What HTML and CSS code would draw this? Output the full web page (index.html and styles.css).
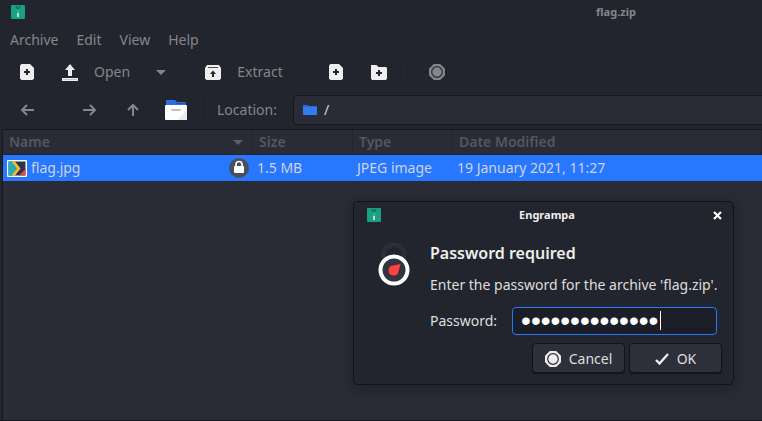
FILE: index.html
```
<!DOCTYPE html>
<html lang="en">
<head>
<meta charset="utf-8">
<title>flag.zip</title>
<link rel="stylesheet" href="styles.css">
</head>
<body>
<svg class="defs" aria-hidden="true">
  <symbol id="app" viewBox="0 0 14 14">
    <rect width="14" height="14" rx="1" fill="#1aa085"/>
    <path d="M4 1h6L8 4H6z" fill="#14735f"/>
    <path d="M6.500 1h1v2h-1z" fill="#1aa085"/>
    <path d="M6 5h2v3H6z" fill="#3fae97"/>
    <path d="M6 8h2v4H6z" fill="#b9e0d7"/>
  </symbol>
  <symbol id="stop" viewBox="0 0 16 16">
    <path d="M4.800 0h6.400L16 4.800v6.400L11.200 16H4.800L0 11.200V4.800z" fill="currentColor"/>
    <circle cx="8" cy="8" r="5.300" fill="none" stroke="#292b36" stroke-width="1.200"/>
  </symbol>
</svg>
<main class="window">
  <header class="titlebar">
    <svg class="app-icon"><use href="#app"/></svg>
    <h1>flag.zip</h1>
  </header>
  <nav class="menubar">
    <button>Archive</button><button>Edit</button><button>View</button><button>Help</button>
  </nav>
  <div class="toolbar main-tools">
    <button class="tool" aria-label="New">
      <svg width="14" height="16" viewBox="0 0 14 16"><path d="M1.500 0H10l4 4v10.500L12.500 16h-11L0 14.500v-13z" fill="#eeeeec"/><path d="M6 5h2v2h2v2H8v2H6V9H4V7h2z" fill="#23252e"/></svg>
    </button>
    <button class="tool open">
      <svg width="16" height="17" viewBox="0 0 16 17"><path d="M8 0l5 6h-3v6H6V6H3z" fill="#eeeeec"/><path d="M0 14h16v3H0z" fill="#eeeeec"/><path d="M1 15h14v1H1z" fill="#c8c8c6"/></svg>
      <span>Open</span>
    </button>
    <button class="tool drop" aria-label="Recent archives">
      <svg width="10" height="5" viewBox="0 0 10 5"><path d="M0 0h10L5 5z" fill="#85868a"/></svg>
    </button>
    <button class="tool extract">
      <svg width="16" height="15" viewBox="0 0 16 15"><path d="M2 0h12l2 3v10.500L14.500 15h-13L0 13.500V3z" fill="#eeeeec"/><path d="M3 2h10v1H3z" fill="#4c4e55"/><path d="M8 5.500l3 3.500H9v3H7V9H5z" fill="#23252e"/></svg>
      <span>Extract</span>
    </button>
    <div class="group">
      <button class="tool" aria-label="Add files">
        <svg width="14" height="16" viewBox="0 0 14 16"><path d="M1.500 0H10l4 4v10.500L12.500 16h-11L0 14.500v-13z" fill="#eeeeec"/><path d="M6 5h2v2h2v2H8v2H6V9H4V7h2z" fill="#23252e"/></svg>
      </button>
      <button class="tool" aria-label="Add folder">
        <svg width="16" height="16" viewBox="0 0 16 16"><path d="M0 1h5.500l2 2H15l1 1v10.500L15 16H1l-1-1.500z" fill="#eeeeec"/><path d="M7 6h2v2h2v2H9v2H7v-2H5V8h2z" fill="#23252e"/></svg>
      </button>
    </div>
    <button class="tool stop" aria-label="Stop"><svg width="16" height="16"><use href="#stop"/></svg></button>
  </div>
  <div class="toolbar location-tools">
    <button class="tool" aria-label="Back"><svg width="14" height="12" viewBox="0 0 14 12"><path d="M14 6H2M7 1L2 6l5 5" class="arrow"/></svg></button>
    <button class="tool forward" aria-label="Forward"><svg width="14" height="12" viewBox="0 0 14 12"><path d="M0 6h12M7 1l5 5-5 5" class="arrow"/></svg></button>
    <button class="tool" aria-label="Up"><svg width="12" height="14" viewBox="0 0 12 14"><path d="M6 13V2M1 7l5-5 5 5" class="arrow"/></svg></button>
    <button class="tool" aria-label="Home">
      <svg width="22" height="20" viewBox="0 0 22 20"><path d="M1 1q0-1 1-1h8l2 2h8q1 0 1 1v3H1z" fill="#2f6de0"/><path d="M11 3h10v1H11z" fill="#2252ad"/><rect y="5" width="22" height="15" rx="1" fill="#fff"/><path d="M22 10v10H12z" fill="#ececec"/><rect x="6" y="9" width="10" height="2" rx="1" fill="#c4c4c4"/></svg>
    </button>
    <label for="location">Location:</label>
    <div class="entry">
      <svg width="14" height="10" viewBox="0 0 14 10"><path d="M0 0h5l1 1h8v9H0z" fill="#2e66d0"/><path d="M0 2h14v8H0z" fill="#367bf0"/></svg>
      <input id="location" value="/">
    </div>
  </div>
  <section class="files">
    <table>
      <colgroup><col class="col-name"><col class="col-mid"><col class="col-mid"><col></colgroup>
      <thead><tr>
        <th><div class="split">Name <svg width="10" height="5" viewBox="0 0 10 5"><path d="M0 0h10L5 5z" fill="#5c5e64"/></svg></div></th>
        <th>Size</th><th>Type</th><th>Date Modified</th>
      </tr></thead>
      <tbody><tr>
        <td><div class="split file">
          <svg width="20" height="17" viewBox="0 0 20 17"><rect width="20" height="17" rx="1" fill="#fff"/><path d="M1.500 1.500h17v14h-17z" fill="#2d3648"/><path d="M1.500 1.500H5l5 7-5 7H1.500z" fill="#23b0bd"/><path d="M4.500 1.500H8l5.500 7-5.500 7H4.500l5.500-7z" fill="#fdbc2c"/><path d="M18.500 9v6.500H12z" fill="#f0443e"/></svg>
          <span>flag.jpg</span>
          <svg class="lock" width="20" height="20" viewBox="0 0 20 20"><circle cx="10" cy="10" r="10" fill="#4a4f5c"/><rect x="5" y="8" width="10" height="7" rx="1" fill="#fff"/><path d="M7 8V6.500a3 3 0 0 1 6 0V8" fill="none" stroke="#fff" stroke-width="1.700"/></svg>
        </div></td>
        <td>1.5 MB</td><td>JPEG image</td><td>19 January 2021, 11:27</td>
      </tr></tbody>
    </table>
  </section>
</main>
<form class="dialog" role="dialog" aria-labelledby="dialog-title">
  <header class="dialog-bar">
    <svg class="app-icon"><use href="#app"/></svg>
    <h2 id="dialog-title">Engrampa</h2>
    <button type="button" class="close" aria-label="Close"><svg width="9" height="9" viewBox="0 0 9 9"><path d="M1 1l7 7M8 1L1 8" stroke="#fff" stroke-width="2.200"/></svg></button>
  </header>
  <div class="dialog-body">
    <svg class="padlock" width="32" height="43" viewBox="0 0 32 43">
      <path d="M4 20V12a12 12 0 0 1 24 0v8h-4v-8a8 8 0 0 0-16 0v8z" fill="#2a2c36"/>
      <path d="M4 14V12a12 12 0 0 1 24 0v2" fill="none" stroke="#333540"/>
      <circle cx="16" cy="27" r="13.500" fill="#323440" stroke="#fff" stroke-width="4"/>
      <path d="M22.500 21l-2 7.500a5 5 0 1 1-5.500-6z" fill="#ff4141"/>
    </svg>
    <div class="content">
      <h3>Password required</h3>
      <p>Enter the password for the archive 'flag.zip'.</p>
      <div class="field">
        <label for="password">Password:</label>
        <div class="password-box"><input id="password" type="password" value="12345678901234"><i class="caret"></i></div>
      </div>
    </div>
  </div>
  <footer>
    <button type="button"><svg width="16" height="16"><use href="#stop"/></svg>Cancel</button>
    <button type="button" class="ok"><svg width="14" height="12" viewBox="0 0 14 12"><path d="M1 7l3.500 3.500L13 1" fill="none" stroke="#eeeeec" stroke-width="2.400"/></svg>OK</button>
  </footer>
</form>
</body>
</html>
```

FILE: styles.css
```
* { box-sizing: border-box; }

body {
  margin: 0;
  background: #23252e;
  color: #85868a;
  font: 14px/20px "Noto Sans", sans-serif;
  overflow: hidden;
}

h1, h2, h3, p { margin: 0; }
button, input { font: inherit; color: inherit; background: none; border: 0; padding: 0; outline: 0; }
svg { display: block; flex: none; }
.defs { position: absolute; width: 0; height: 0; }
.app-icon { width: 14px; height: 14px; }

.window { display: flex; flex-direction: column; min-height: 100vh; border-bottom: 1px solid #17181f; }

.titlebar { display: flex; align-items: center; height: 24px; padding-left: 11px; }
.titlebar h1 { margin-left: 571px; font-size: 11px; font-weight: 700; }

.menubar { display: flex; gap: 18px; height: 29px; padding: 4px 10px 0; align-items: center; border-bottom: 1px solid #20222a; }

.toolbar { display: flex; align-items: center; }
.tool { display: flex; align-items: center; justify-content: center; width: 43px; height: 30px; flex: none; }
.main-tools { height: 38px; padding-left: 5px; }
.open { width: 91px; justify-content: flex-start; padding-left: 14px; gap: 16px; }
.extract { width: 124px; gap: 16px; border: solid #20222a; border-width: 0 1px; }
.group { display: flex; padding: 0 7px 0 8px; border-right: 1px solid #20222a; }
.stop { width: 58px; }

.location-tools { height: 38px; padding-left: 5px; }
.forward { width: 63px; padding-left: 20px; }
.location-tools label { display: flex; align-items: center; height: 30px; margin-left: 6px; padding: 0 16px 0 13px; border-left: 1px solid #20222a; }
.arrow { fill: none; stroke: #85868a; stroke-width: 2; }
.entry { display: flex; flex: 1; align-items: center; gap: 7px; height: 30px; padding-left: 9px; margin-right: -4px; background: #292b36; border: 1px solid #16171f; border-radius: 4px; color: #d6d7da; }
.entry input { flex: 1; min-width: 0; }

.files { flex: 1; margin-left: 2px; background: #292b36; border: solid #17181f; border-width: 1px 0 0 1px; }
table { width: 100%; table-layout: fixed; border-collapse: separate; border-spacing: 0; text-align: left; }
.col-name { width: 250px; }
.col-mid { width: 100px; }
th { height: 25px; padding: 0 0 0 6px; color: #55575d; font-weight: 600; border-right: 1px solid #22242d; border-bottom: 1px solid #22242d; }
td { height: 26px; padding: 0 4px; color: #cdd3e0; background: #2777ff; }
.split { display: flex; align-items: center; justify-content: space-between; padding-right: 9px; }
.file { justify-content: flex-start; gap: 4px; padding: 0; }
.lock { margin-left: auto; }

.dialog { position: absolute; left: 353px; top: 201px; width: 381px; background: #23252e; border: 1px solid #13141a; border-radius: 5px; box-shadow: 0 3px 16px rgba(0, 0, 0, .3); color: #dededf; }
.dialog-bar { display: flex; align-items: center; justify-content: space-between; height: 26px; padding: 0 11px 0 13px; }
.dialog-bar h2 { color: #eeeeec; font-size: 11px; font-weight: 700; }
.close svg { margin: auto; }
.dialog-body { display: flex; gap: 20px; padding: 14px 17px 0 24px; }
.padlock { margin-top: 1px; }
.content { flex: 1; }
h3 { height: 22px; font-size: 16px; line-height: 22px; font-weight: 600; color: #eeeeec; }
.content p { margin-top: 11px; white-space: nowrap; }
.field { display: flex; align-items: center; gap: 15px; margin-top: 12px; }
.password-box { position: relative; flex: 1; height: 28px; background: #1b1e26; border: 1px solid #2777ff; border-radius: 4px; }
.password-box input { display: block; width: 100%; height: 26px; padding-left: 8px; color: #fff; font: 28px/26px "Liberation Sans", sans-serif; }
.caret { position: absolute; left: 147px; top: 3px; width: 1px; height: 19px; background: #fff; }
footer { display: flex; justify-content: flex-end; gap: 4px; padding: 8px 11px 11px; }
footer button { display: flex; align-items: center; justify-content: center; gap: 8px; width: 93px; height: 30px; padding-top: 1px; background: #2d2f3a; border: 1px solid #13141a; border-radius: 4px; box-shadow: 0 1px 1px #13141a; }
footer svg { color: #eeeeec; }
```
